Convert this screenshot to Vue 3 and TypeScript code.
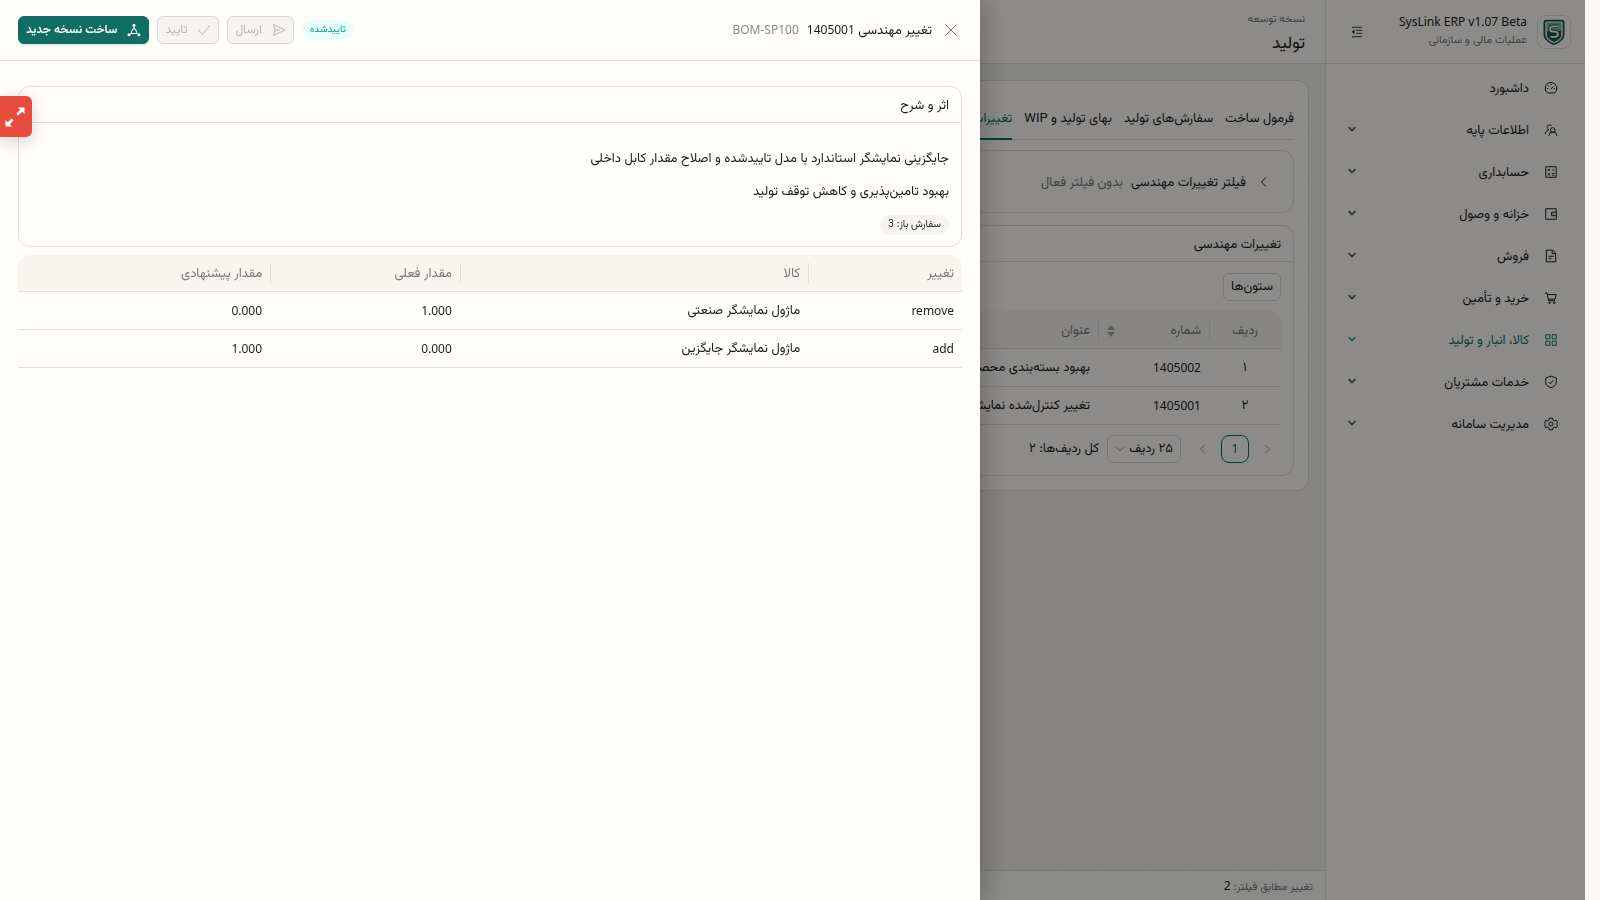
<script setup lang="ts">
import { ref } from 'vue'

interface MenuItem { label: string; paths: string[]; leaf?: boolean; active?: boolean }
interface Change { id: string; kind: string; item: string; current: string; proposed: string }

const menu: MenuItem[] = [
  { label: 'داشبورد', leaf: true, paths: ['M6 20.5a10 10 0 1 1 12 0z', 'M12 14l4-4.500', 'M12 5v2M5 13h2M17 13h2M7 8l1.500 1.500'] },
  { label: 'اطلاعات پایه', paths: ['M15 8a4 4 0 1 1 0 8a4 4 0 1 1 0-8z', 'M8.500 22a6.500 6.500 0 0 1 13.500 0', 'M13 4.500a4.500 4.500 0 1 0-4.500 7.500', 'M2 19a8 8 0 0 1 6-7'] },
  { label: 'حسابداری', paths: ['M3 3h18v18H3z', 'M6.500 8.500h4M8.500 6.500v4M14 8.500h4M6.500 14l4 4M10.500 14l-4 4M14 14.500h4M14 17.500h4'] },
  { label: 'خزانه و وصول', paths: ['M3 3h18v18H3z', 'M21 9h-8v6h8', 'M15.500 12h1.500'] },
  { label: 'فروش', paths: ['M4 2h11l5 5v15H4z', 'M14 2v6h6', 'M7.500 12.500h9M7.500 16.500h5'] },
  { label: 'خرید و تأمین', paths: ['M1.500 3.500h3.500l3 13h11', 'M6 6h15l-2 8H8', 'M9.500 18.500a1.500 1.500 0 1 1 0 3a1.500 1.500 0 1 1 0-3zM17.500 18.500a1.500 1.500 0 1 1 0 3a1.500 1.500 0 1 1 0-3z'] },
  { label: 'کالا، انبار و تولید', active: true, paths: ['M3 3h7v7H3zM14 3h7v7h-7zM3 14h7v7H3zM14 14h7v7h-7z'] },
  { label: 'خدمات مشتریان', paths: ['M12 2l9 3v8c0 4-4 7-9 9c-5-2-9-5-9-9V5z', 'M8 12l3 3l5-6'] },
  { label: 'مدیریت سامانه', paths: ['M9.500 2h5l1 3l2.500 1.500l3-.7l2.500 4.200l-2.200 2l2.200 2l-2.500 4.200l-3-.7l-2.500 1.500l-1 3h-5l-1-3l-2.500-1.500l-3 .7L.5 14l2.200-2l-2.200-2L3 5.800l3 .7L8.500 5z', 'M12 8.500a3.500 3.500 0 1 1 0 7a3.500 3.500 0 1 1 0-7z'] },
]

const tabs = ['فرمول ساخت', 'سفارش‌های تولید', 'بهای تولید و WIP', 'تغییرات مهندسی']
const activeTab = ref(3)

const orders = [
  { row: '۱', no: '1405002', title: 'بهبود بسته‌بندی محصول' },
  { row: '۲', no: '1405001', title: 'تغییر کنترل‌شده نمایشگر' },
]

const changes: Change[] = [
  { id: 'c1', kind: 'remove', item: 'ماژول نمایشگر صنعتی', current: '1.000', proposed: '0.000' },
  { id: 'c2', kind: 'add', item: 'ماژول نمایشگر جایگزین', current: '0.000', proposed: '1.000' },
]

const pageSize = ref('25')
</script>

<template>
  <div class="app" dir="rtl">
    <aside class="side">
      <div class="brand">
        <span class="logo">
          <svg viewBox="0 0 32 32" width="28" height="28" aria-hidden="true">
            <path class="l-rim" d="M4 5q0-3 3-3h18q3 0 3 3v14q0 7-12 12Q4 26 4 19z" />
            <path class="l-pale" d="M6 6q0-2 2-2h16q2 0 2 2v13q0 6-10 10Q6 25 6 19z" />
            <path class="l-rim" d="M8 6h16v13q0 5-8 8q-8-3-8-8z" />
            <path class="l-mint" d="M16 6h8v9h-8zM8 6h8v9H8z" />
            <path class="l-dark" d="M16 15h8v4q0 5-8 8z" />
            <path class="l-back" d="M20.500 9.500H15q-3.500 0-3.500 3t3.500 3h2q3.500 0 3.500 3t-3.500 3h-5" />
            <path class="l-s" d="M20.500 9.500H15q-3.500 0-3.500 3t3.500 3h2q3.500 0 3.500 3t-3.500 3h-5" />
          </svg>
        </span>
        <div class="brand-text">
          <strong class="lat" dir="ltr">SysLink ERP v1.07 Beta</strong>
          <small>عملیات مالی و سازمانی</small>
        </div>
        <button class="fold" type="button" aria-label="جمع کردن منو">
          <svg viewBox="0 0 14 14" width="12" height="12" aria-hidden="true">
            <path d="M1 1.500h12M6 5h7M6 8.500h7M1 12.500h12" />
            <path class="solid" d="M4 4v5.500L1 6.750z" />
          </svg>
        </button>
      </div>
      <nav class="menu">
        <a v-for="m in menu" :key="m.label" href="#" class="item" :class="{ on: m.active }">
          <svg class="ico" viewBox="0 0 24 24" width="14" height="14" aria-hidden="true">
            <path v-for="p in m.paths" :key="p" :d="p" />
          </svg>
          <span class="item-label">{{ m.label }}</span>
          <svg v-if="!m.leaf" class="chev" viewBox="0 0 10 10" width="10" height="10" aria-hidden="true"><path d="M1.500 2L5 5.500L8.500 2" /></svg>
        </a>
      </nav>
    </aside>

    <div class="page">
      <header class="top">
        <small>نسخه توسعه</small>
        <h1>تولید</h1>
      </header>

      <main class="content">
        <section class="panel">
          <div class="tabs" role="tablist">
            <button v-for="(t, i) in tabs" :key="t" type="button" role="tab" class="tab" :class="{ on: activeTab === i }" :aria-selected="activeTab === i" @click="activeTab = i">{{ t }}</button>
          </div>

          <button class="filter" type="button">
            <svg viewBox="0 0 12 12" width="12" height="12" aria-hidden="true"><path d="M8 1.500L3.500 6L8 10.500" /></svg>
            <span class="filter-title">فیلتر تغییرات مهندسی</span>
            <span class="muted">بدون فیلتر فعال</span>
          </button>

          <section class="card">
            <h2 class="card-head">تغییرات مهندسی</h2>
            <div class="card-body">
              <button class="btn" type="button">ستون‌ها</button>
              <table class="grid list">
                <colgroup><col class="w-row"><col class="w-no"><col></colgroup>
                <thead>
                  <tr>
                    <th class="mid">ردیف</th>
                    <th>
                      <span class="sort">شماره
                        <svg viewBox="0 0 8 12" width="8" height="12" aria-hidden="true"><path d="M4 0l4 5H0zM0 7h8l-4 5z" /></svg>
                      </span>
                    </th>
                    <th>عنوان</th>
                  </tr>
                </thead>
                <tbody>
                  <tr v-for="o in orders" :key="o.no">
                    <td class="mid">{{ o.row }}</td>
                    <td class="lat">{{ o.no }}</td>
                    <td>{{ o.title }}</td>
                  </tr>
                </tbody>
              </table>
              <div class="pager">
                <button class="pg" type="button" aria-label="صفحه قبل" disabled><svg viewBox="0 0 12 12" width="12" height="12" aria-hidden="true"><path d="M4 2L8.500 6L4 10" /></svg></button>
                <button class="pg cur lat" type="button">1</button>
                <button class="pg" type="button" aria-label="صفحه بعد" disabled><svg viewBox="0 0 12 12" width="12" height="12" aria-hidden="true"><path d="M8 2L3.500 6L8 10" /></svg></button>
                <span class="size">
                  <select v-model="pageSize" aria-label="تعداد ردیف در صفحه">
                    <option value="25">۲۵ ردیف</option>
                  </select>
                  <svg viewBox="0 0 10 10" width="10" height="10" aria-hidden="true"><path d="M1 2.500L5 7L9 2.500" /></svg>
                </span>
                <span>کل ردیف‌ها: ۲</span>
              </div>
            </div>
          </section>
        </section>
      </main>

      <footer class="foot"><span class="muted">تغییر مطابق فیلتر:</span> <b class="lat">2</b></footer>
    </div>

    <div class="mask"></div>

    <section class="drawer" role="dialog" aria-labelledby="drawer-title">
      <header class="drawer-head">
        <button class="close" type="button" aria-label="بستن">
          <svg viewBox="0 0 14 14" width="14" height="14" aria-hidden="true"><path d="M1.500 1.500l11 11M12.500 1.500l-11 11" /></svg>
        </button>
        <h2 id="drawer-title" class="drawer-title">تغییر مهندسی <span class="lat">1405001</span></h2>
        <span class="code lat" dir="ltr">BOM-SP100</span>
        <span class="grow"></span>
        <span class="tag ok">تاییدشده</span>
        <button class="btn" type="button" disabled>
          <svg viewBox="0 0 14 14" width="14" height="14" aria-hidden="true"><path d="M1.500 1.500L13 7L1.500 12.500L3 7zM3 7h5" /></svg>
          ارسال
        </button>
        <button class="btn" type="button" disabled>
          <svg viewBox="0 0 14 14" width="14" height="14" aria-hidden="true"><path d="M1.500 7L5.500 11.500L12.500 2.500" /></svg>
          تایید
        </button>
        <button class="btn primary" type="button">
          <svg viewBox="0 0 14 14" width="14" height="14" aria-hidden="true">
            <path d="M7 3v3M5.500 6h3M5.500 6L4 10.500h6L8.500 6M4 10.500L2 12M10 10.500L12 12" />
            <path d="M7 .8a1.500 1.500 0 1 1 0 3a1.500 1.500 0 1 1 0-3zM2 10.300a1.500 1.500 0 1 1 0 3a1.500 1.500 0 1 1 0-3zM12 10.300a1.500 1.500 0 1 1 0 3a1.500 1.500 0 1 1 0-3z" class="solid" />
          </svg>
          ساخت نسخه جدید
        </button>
      </header>

      <div class="drawer-body">
        <section class="card">
          <h3 class="card-head">اثر و شرح</h3>
          <div class="card-body notes">
            <p>جایگزینی نمایشگر استاندارد با مدل تاییدشده و اصلاح مقدار کابل داخلی</p>
            <p>بهبود تامین‌پذیری و کاهش توقف تولید</p>
            <span class="tag">سفارش باز: 3</span>
          </div>
        </section>
        <table class="grid detail">
          <colgroup><col class="w-kind"><col class="w-item"><col class="w-cur"><col></colgroup>
          <thead>
            <tr><th>تغییر</th><th>کالا</th><th>مقدار فعلی</th><th>مقدار پیشنهادی</th></tr>
          </thead>
          <tbody>
            <tr v-for="c in changes" :key="c.id">
              <td class="lat">{{ c.kind }}</td>
              <td>{{ c.item }}</td>
              <td class="lat">{{ c.current }}</td>
              <td class="lat">{{ c.proposed }}</td>
            </tr>
          </tbody>
        </table>
      </div>
    </section>

    <button class="expand" type="button" aria-label="تمام صفحه">
      <svg viewBox="0 0 20 20" width="20" height="20" aria-hidden="true">
        <path d="M13 .5H19.500V7L17.300 4.800L13.200 8.600L11.400 6.800L15.200 2.700z" />
        <path d="M7 19.500H.5V13L2.700 15.200L6.800 11.400L8.600 13.200L4.800 17.300z" />
      </svg>
    </button>
  </div>
</template>

<style>
body { margin: 0; background: #faf9f5; }
</style>

<style scoped>
*, *::before, *::after { box-sizing: border-box; }
.app {
  --line: #dfded9;
  --text: #1a1d1c;
  --muted: #777a78;
  --brand: #0f6d64;
  --surface: #fffefb;
  display: flex;
  min-height: 100vh;
  margin-right: 15px;
  font: 400 13px/20px Vazirmatn, 'Noto Sans Arabic', 'Noto Sans', 'DejaVu Sans', sans-serif;
  color: var(--text);
  background:
    linear-gradient(#f0eee6 1px, transparent 1px) 0 0 / 44px 44px,
    linear-gradient(90deg, #f0eee6 1px, transparent 1px) 0 0 / 44px 44px,
    linear-gradient(135deg, #edf3ea 0, #f4f2eb 60%);
}
h1, h2, h3, p { margin: 0; font-weight: 400; font-size: 13px; }
button, select { font: inherit; color: inherit; margin: 0; }
button { cursor: pointer; background: none; border: 0; padding: 0; }
a { color: inherit; text-decoration: none; }
svg { display: block; flex: none; }
svg path { fill: none; stroke: currentColor; }
svg path.solid { fill: currentColor; stroke: none; }
.lat { font-family: 'Noto Sans', 'Open Sans', sans-serif; font-size: 12px; font-weight: 400; }
.muted { color: var(--muted); }

.side { width: 260px; flex: none; background: #fffdfa; border-left: 1px solid var(--line); }
.brand { display: flex; align-items: center; gap: 10px; height: 64px; padding: 0 14px 0 17px; border-bottom: 1px solid var(--line); }
.logo { display: grid; place-items: center; width: 34px; height: 34px; border: 1px solid var(--line); border-radius: 8px; }
.logo path { stroke: none; }
.logo .l-rim { fill: #0b5a4e; }
.logo .l-pale { fill: #d3e2da; }
.logo .l-mint { fill: #7fae9b; }
.logo .l-dark { fill: #2c4a4c; }
.logo .l-back { stroke: #0b5a4e; stroke-width: 4; }
.logo .l-s { stroke: #f4fbf6; stroke-width: 2; }
.brand-text { display: flex; flex-direction: column; flex: 1; }
.brand-text strong { line-height: 18px; text-align: right; }
.brand-text small { font-size: 11px; line-height: 20px; color: var(--muted); }
.fold { display: grid; place-items: center; width: 28px; height: 28px; }
.menu { display: flex; flex-direction: column; gap: 4px; padding-top: 5px; }
.item { display: flex; align-items: center; gap: 15px; height: 38px; padding: 0 27px 0 21px; }
.item-label { flex: 1; padding-top: 2px; }
.item.on { color: #0f766e; }
.ico path { stroke-width: 1.700; }
.chev path { stroke-width: 1.700; }
.chev { opacity: .75; }

.page { flex: 1; min-width: 0; display: flex; flex-direction: column; }
.top { height: 64px; padding: 10px 20px 0; background: #fffdfa; border-bottom: 1px solid var(--line); }
.top small { display: block; font-size: 11px; line-height: 20px; color: var(--muted); }
.top h1 { font-size: 17px; line-height: 28px; }
.content { flex: 1; padding: 16px; }
.panel { padding: 14px; background: #fffdfa; border: 1px solid var(--line); border-radius: 12px; }
.tabs { display: flex; gap: 12px; height: 45px; margin-bottom: 10px; border-bottom: 1px solid var(--line); }
.tab { height: 45px; padding-top: 4px; border-bottom: 2px solid transparent; white-space: nowrap; }
.tab.on { color: var(--brand); border-color: var(--brand); }
.filter { display: flex; align-items: center; gap: 12px; width: 100%; height: 63px; padding: 0 23px; margin-bottom: 12px; border: 1px solid var(--line); border-radius: 12px; }
.filter span { padding-top: 2px; }
.filter .muted { margin-right: -4px; }
.card { border: 1px solid var(--line); border-radius: 12px; }
.card-head { height: 36px; line-height: 38px; padding: 0 12px; border-bottom: 1px solid var(--line); }
.card-body { padding: 11px 12px 12px; }

.btn { display: inline-flex; align-items: center; justify-content: center; gap: 10px; height: 28px; padding: 0 7px; border: 1px solid #d8d7d2; border-radius: 6px; white-space: nowrap; }
.btn:disabled { color: #b7b6b3; background: #f5f4f1; cursor: default; }
.btn.primary { color: #fff; background: var(--brand); border-color: var(--brand); font-weight: 600; box-shadow: 0 2px 0 rgba(5, 80, 70, .1); }
.drawer-head .btn { font-size: 12px; }

.grid { width: 100%; border-collapse: separate; border-spacing: 0; table-layout: fixed; }
.grid th, .grid td { height: 38px; padding: 0 8px; text-align: right; border-bottom: 1px solid var(--line); white-space: nowrap; overflow: hidden; }
.grid th { position: relative; padding-top: 2px; font-weight: 400; color: #777a78; background: #f8f5f0; }
.grid th:first-child { border-top-right-radius: 12px; }
.grid th:last-child { border-top-left-radius: 12px; }
.grid th:not(:last-child)::after { content: ''; position: absolute; left: 0; top: 8px; bottom: 8px; width: 1px; background: var(--line); }
.grid .mid { text-align: center; }
.list { margin-top: 10px; }
.w-row { width: 72px; }
.w-no { width: 111px; }
.sort { display: flex; align-items: center; justify-content: space-between; }
.sort svg path { fill: #a3a3a0; stroke: none; }
.sort svg { margin-left: 1px; }

.pager { display: flex; align-items: center; gap: 4px; margin-top: 10px; }
.pg { display: grid; place-items: center; width: 28px; height: 28px; border-radius: 8px; }
.pg:disabled { color: #a9a9a6; }
.pg.cur { border: 1px solid var(--brand); color: var(--brand); }
.size { position: relative; margin: 0 4px; }
.size select { display: block; appearance: none; width: 74px; height: 28px; padding: 0 7px; border: 1px solid #d8d7d2; border-radius: 6px; background: transparent; }
.size svg { position: absolute; left: 8px; top: 9px; color: #a9a9a6; }

.foot { height: 30px; padding: 0 12px; line-height: 29px; font-size: 11px; background: #fbfbf8; border-top: 1px solid var(--line); }

.mask { position: fixed; inset: 0 15px 0 0; background: rgba(0, 0, 0, .45); }
.drawer { position: fixed; top: 0; bottom: 0; left: 0; width: 980px; max-width: 100%; background: var(--surface); box-shadow: 6px 0 24px rgba(0, 0, 0, .22); }
.drawer-head { display: flex; align-items: center; gap: 8px; padding: 16px 18px; border-bottom: 1px solid var(--line); }
.close { display: grid; place-items: center; width: 22px; height: 22px; color: #777; }
.drawer-title { white-space: nowrap; }
.code { color: #8a8b89; }
.grow { flex: 1; }
.tag { padding: 0 8px; border-radius: 10px; font-size: 10px; font-weight: 400; line-height: 20px; background: #f5f4f2; }
.tag.ok { color: #13a3a0; background: #e6fffb; }
.drawer-body { display: flex; flex-direction: column; gap: 8px; padding: 25px 18px; }
.notes { display: flex; flex-direction: column; align-items: flex-start; gap: 13px; padding-top: 26px; padding-bottom: 11px; }
.w-kind { width: 16.3%; }
.w-item { width: 36.9%; }
.w-cur { width: 20.1%; }
.detail th { height: 37px; }

.expand { position: fixed; left: 0; top: 96px; display: grid; place-items: center; width: 32px; height: 41px; padding-right: 2px; color: #fff; background: #e74c3c; border-radius: 0 6px 6px 0; box-shadow: 0 4px 18px rgba(0, 0, 0, .18); }
.expand path { fill: currentColor; stroke: none; }
</style>
